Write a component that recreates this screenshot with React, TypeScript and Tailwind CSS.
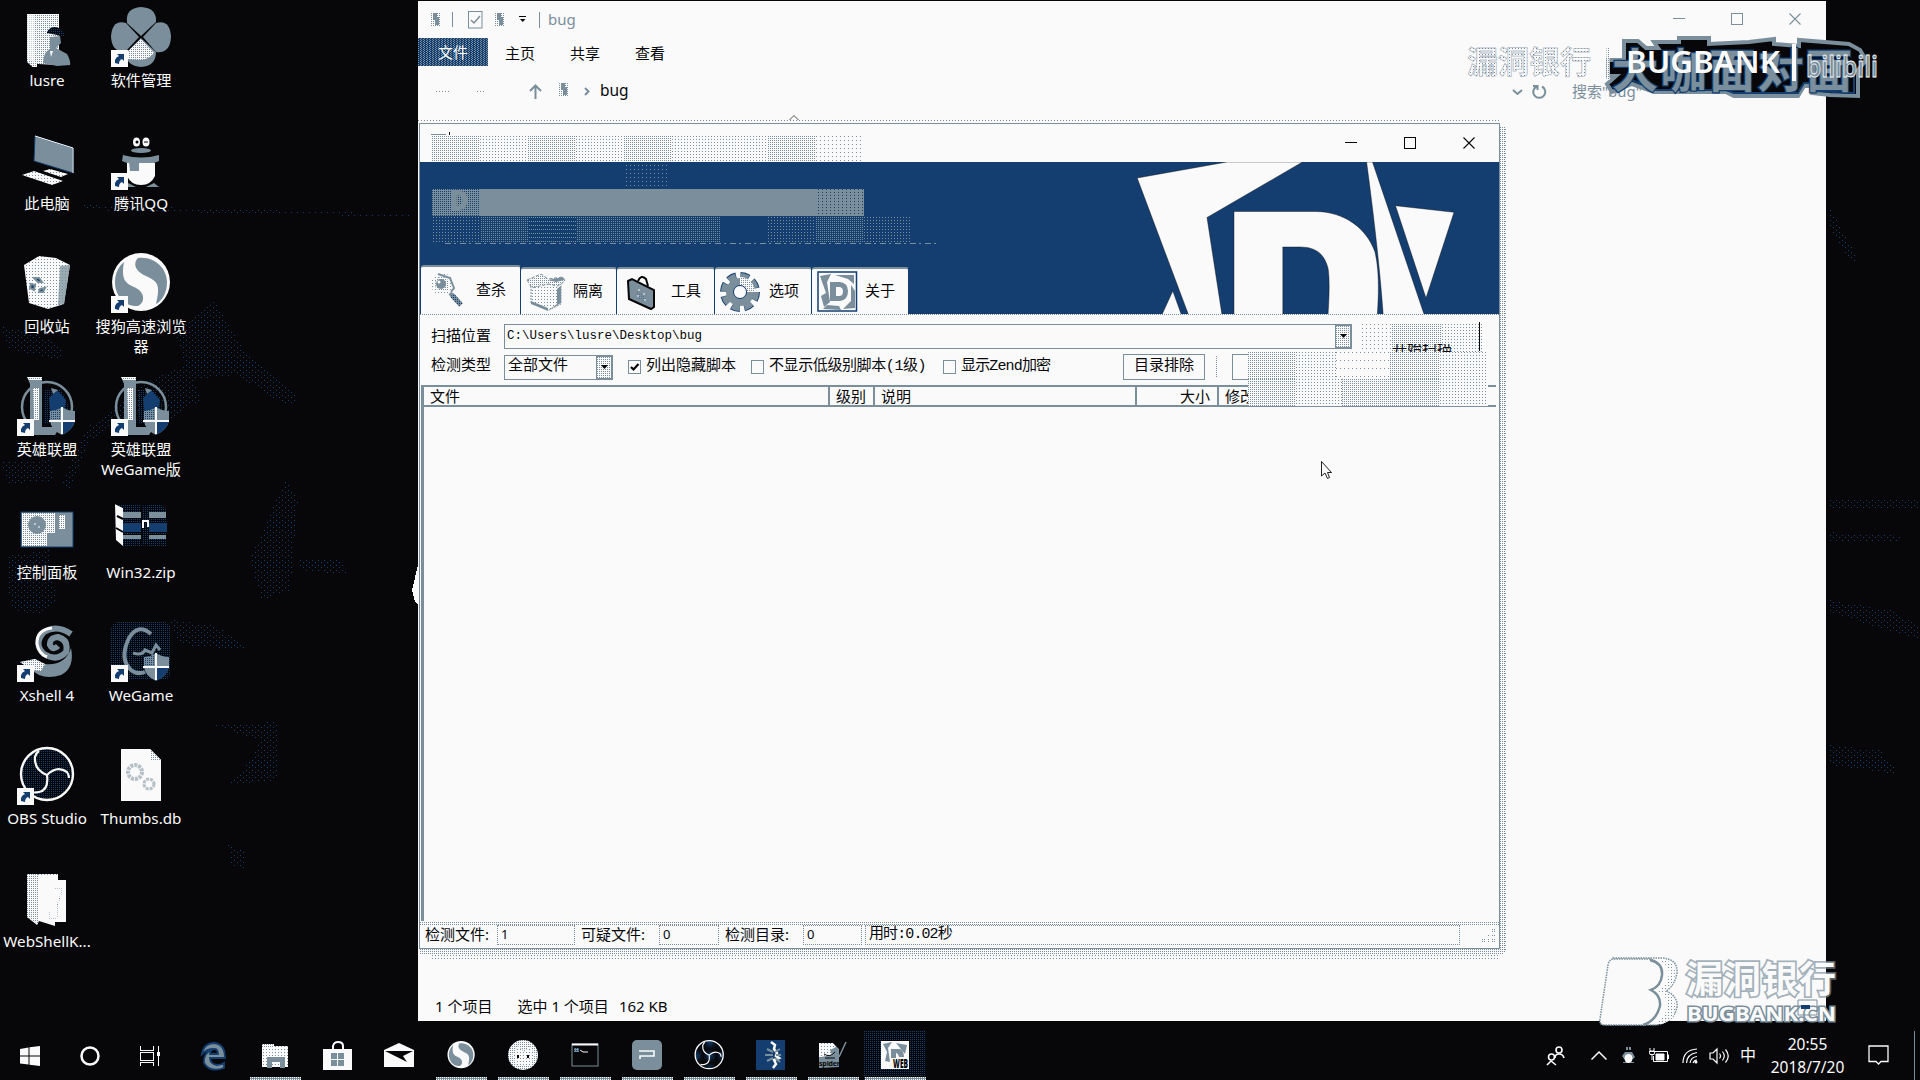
import React from "react";

const SANS = "font-['Noto_Sans','Noto_Sans_CJK_SC',sans-serif]";
const MONO = "font-['Liberation_Mono','Noto_Sans_CJK_SC',monospace]";

const CHECKER = "bg-[repeating-conic-gradient(#7a8f9b_0_25%,transparent_0_50%)] bg-[length:2px_2px]";
const DOT2 = "bg-[radial-gradient(circle_at_0.5px_0.5px,#7a8f9b_0.7px,transparent_0.7px)] bg-[length:2px_2px]";
const DOT3 = "bg-[radial-gradient(circle_at_0.5px_0.5px,#7a8f9b_0.7px,transparent_0.7px)] bg-[length:3px_3px]";
const DOT4 = "bg-[radial-gradient(circle_at_0.5px_0.5px,#7a8f9b_0.7px,transparent_0.7px)] bg-[length:4px_4px]";
const BLUEDOT = "bg-[radial-gradient(circle_at_0.5px_0.5px,#133e6f_0.7px,transparent_0.7px)] bg-[length:2px_2px]";

const W = "#fafafb";
const G = "#7a8f9b";
const B = "#133e6f";
const K = "#070709";

function Patterns() {
  return (
    <svg className="absolute h-0 w-0">
      <defs>
        <pattern id="wg" width="2" height="2" patternUnits="userSpaceOnUse">
          <rect width="2" height="2" fill={W} />
          <rect width="1" height="1" fill={G} />
        </pattern>
        <pattern id="wg3" width="3" height="3" patternUnits="userSpaceOnUse">
          <rect width="3" height="3" fill={W} />
          <rect width="1" height="1" fill={G} />
        </pattern>
        <pattern id="bk" width="2" height="2" patternUnits="userSpaceOnUse">
          <rect width="2" height="2" fill={K} />
          <rect width="1" height="1" fill={B} />
        </pattern>
        <pattern id="bg2" width="2" height="2" patternUnits="userSpaceOnUse">
          <rect width="2" height="2" fill={G} />
          <rect width="1" height="1" fill={B} />
        </pattern>
        <pattern id="speck" width="6" height="5" patternUnits="userSpaceOnUse">
          <rect x="0" y="0" width="1" height="1" fill={B} />
          <rect x="3" y="2" width="1" height="1" fill={B} />
        </pattern>
      </defs>
    </svg>
  );
}

function Wallpaper() {
  return (
    <svg className="absolute inset-0" width="1920" height="1080" shapeRendering="crispEdges">
      <g fill="url(#speck)">
        <path d="M84 205L190 208 410 214V217L84 210Z" />
        <path d="M0 326L25 330 60 345 62 360 10 350Z" />
        <path d="M140 385L190 362 200 400 170 420 150 405 90 440 70 490 62 485 85 430Z" />
        <path d="M0 462L50 460 55 480 10 484Z" />
        <path d="M8 555L50 550 56 600 40 616 10 610Z" />
        <path d="M175 330L215 300 245 350 300 400 285 405 235 375 190 380Z" />
        <path d="M285 480L298 500 290 590 262 600 250 560Z" />
        <path d="M212 725L278 722V780L225 785 252 760 260 740Z" />
        <path d="M228 845L246 850 244 868 232 866Z" />
        <path d="M170 620L215 625 250 650 180 645Z" />
        <path d="M300 560L340 560 350 575 300 570Z" />
        <path d="M1828 205L1842 230 1860 262 1850 260 1828 225Z" />
        <path d="M1828 500H1920V510H1828ZM1828 532L1900 536V542H1828Z" />
        <path d="M1828 600L1890 610 1920 625V640L1828 612Z" />
        <path d="M1828 745L1880 750 1900 775 1828 765Z" />
      </g>
      <path d="M418 565L412 590 415 602 418 605Z" fill={W} />
    </svg>
  );
}

function Arrow() {
  return (
    <g>
      <rect x="0" y="43" width="17" height="17" fill={W} />
      <path d="M4 56V53Q5 50 8 49L6 47H13V54L11 52Q8 53 8 57Z" fill={B} />
    </g>
  );
}

function Shield() {
  return (
    <g>
      <path d="M45 31Q51 35 58 35V45Q56 54 45 59Q34 54 33 45V35Q40 35 45 31Z" fill={G} />
      <path d="M33 35Q40 35 45 31V45H33Z" fill="url(#bg2)" />
      <path d="M45 45H58Q56 54 45 59Z" fill={B} />
      <path d="M45 31V58M32 45H58" stroke={W} strokeWidth="2" />
    </g>
  );
}

function ObsMark() {
  return (
    <g fill="none" stroke={W}>
      <circle cx="30" cy="29" r="26" fill="url(#bk)" strokeWidth="2.4" />
      <path d="M30 30Q17 25 18 12Q19 8 22 6M30 30Q40 20 50 27Q52 30 52 33M30 30Q32 45 22 47Q17 48 14 47" strokeWidth="2.2" />
    </g>
  );
}

function SogouMark() {
  return (
    <g>
      <circle cx="30" cy="29" r="29" fill={W} />
      <path d="M13 9C10 26 14 30 23 34C35 39 34 50 27 53C14 54 4 43 4 29C4 20 8 13 13 9Z" fill={G} />
      <path d="M27 5C43 3 56 15 56 29C56 40 51 48 45 51C49 34 48 29 37 24C23 18 22 10 27 5Z" fill={G} />
    </g>
  );
}

function LolIcon() {
  return (
    <>
      <circle cx="30" cy="31" r="25" fill="none" stroke={G} strokeWidth="2.5" />
      <path d="M28 14H44L52 30 46 48H28Z" fill="url(#bk)" />
      <path d="M32 22L40 14 49 24 46 40 34 42Z" fill={B} />
      <path d="M10 1H25V51H43L38 59H8L13 52V8Z" fill={G} />
      <path d="M10 1H25V4H12ZM16 12H22V44H17Z" fill="url(#wg)" />
      <path d="M34 12L41 14 36 18Z" fill={G} />
      <Shield />
      <Arrow />
    </>
  );
}

function DesktopGlyph({ kind }: { kind: string }) {
  const body: Record<string, React.ReactNode> = {
    user: (
      <>
        <path d="M10 7H42V58L21 57 20 57V64L10 55Z" fill="url(#wg)" />
        <path d="M10 7H18V56L10 52Z" fill={W} opacity=".6" />
        <path d="M33 30L43 29 44 36 39 41 50 47Q54 54 53 58L40 59 26 56Q27 44 33 42Z" fill={G} />
        <path d="M30 25Q34 18 42 21L48 26 46 30 40 28 30 26Z" fill="url(#bk)" />
        <path d="M33 44H36L34 50Z" fill={W} />
      </>
    ),
    clover: (
      <>
        <g fill={G}>
          <path d="M30 29L16 16Q14 1 30 0Q46 1 45 15Z" />
          <path d="M32 30L45 16Q59 12 60 30Q59 47 45 45Z" />
          <path d="M30 31L45 45Q45 59 30 60Q15 59 15 46Z" />
          <path d="M28 30L15 44Q1 46 0 30Q1 12 15 16Z" />
        </g>
        <path d="M30 32L43 46Q38 52 30 53L17 52 16 45Z" fill="url(#wg)" />
        <Arrow />
      </>
    ),
    pc: (
      <>
        <path d="M18 6L56 18V43L17 31Z" fill={G} stroke={B} strokeWidth="1" />
        <path d="M18 6L56 18V43" fill="none" stroke={W} />
        <path d="M26 41L33 39 51 44 44 47ZM5 45L17 41 46 51 35 55Z" fill="url(#wg3)" />
      </>
    ),
    qq: (
      <>
        <ellipse cx="25.500" cy="12" rx="3.500" ry="4.500" fill={W} />
        <ellipse cx="35" cy="12" rx="3.500" ry="4.500" fill={W} />
        <circle cx="26" cy="12" r="1.500" fill={K} />
        <path d="M33 12H37" stroke={K} />
        <ellipse cx="30" cy="20.500" rx="10" ry="2.500" fill={G} />
        <path d="M12 25Q30 30 48 25V31L43 33H16L11 31Z" fill={G} />
        <path d="M16 33H44V46Q40 55 30 55Q20 55 16 46Z" fill={W} />
        <path d="M18 32H28V41H19ZM17 53L25 57H14ZM43 53L48 57H35Z" fill={G} />
        <Arrow />
      </>
    ),
    bin: (
      <>
        <path d="M7 12L22 3 39 5 53 12 47 51 31 56 12 50Z" fill="url(#wg3)" />
        <path d="M43 13L53 12 47 51 41 52Z" fill={G} opacity=".75" />
        <path d="M17 25L22 25 25 29 21 29ZM14 31L18 32 17 37 13 35ZM23 36L28 35 26 39 22 39Z" fill={B} stroke={G} strokeWidth="2" />
      </>
    ),
    sogou: (
      <>
        <SogouMark />
        <Arrow />
      </>
    ),
    lol: <LolIcon />,
    panel: (
      <>
        <rect x="4" y="13" width="52" height="35" fill={G} stroke={B} />
        <path d="M5 14H38V34H30V47H5Z" fill="url(#wg)" />
        <circle cx="20" cy="26" r="9" fill={G} />
        <path d="M17 25H19M21 28H23" stroke={W} />
        <path d="M42 16H48V30H42Z" fill="url(#wg)" />
      </>
    ),
    zip: (
      <>
        <path d="M4 5L12 9V47L5 41Z" fill={W} />
        <path d="M4 5H50L56 11V47H12V9Z" fill="url(#bk)" />
        <path d="M12 13H55V19H12ZM12 36H55V40H12Z" fill={G} />
        <path d="M12 24H56V33H12Z" fill={B} />
        <path d="M6 17L12 20M5 29L12 33" stroke={K} strokeWidth="2" />
        <path d="M30.500 6H37.500V46H30.500Z" fill="url(#bk)" stroke={K} strokeWidth="1" />
        <path d="M32 29V22H37V28" fill="none" stroke={W} strokeWidth="2" />
      </>
    ),
    xshell: (
      <>
        <path d="M54 12Q40 2 27 10Q16 22 27 32Q40 40 49 30Q52 18 41 15Q32 16 33 23Q36 29 41 24" fill="none" stroke={G} strokeWidth="6" />
        <path d="M35 6Q19 8 20 22Q22 32 30 35" fill="none" stroke={W} strokeWidth="3" />
        <path d="M3 40L18 37 28 42Q48 44 54 26Q58 46 44 53Q32 57 22 53L14 48Z" fill={G} />
        <path d="M3 40L18 37 28 42 24 49 14 48Z" fill="url(#wg)" />
        <Arrow />
      </>
    ),
    wegame: (
      <>
        <rect width="60" height="58" rx="8" fill="url(#bk)" />
        <path d="M40 12Q27 1 18 16Q8 37 20 48Q26 53 34 50" fill="none" stroke={G} strokeWidth="4" />
        <path d="M22 31Q31 34 34 28L41 31 45 23 49 28" fill="none" stroke={G} strokeWidth="3" />
        <Shield />
        <Arrow />
      </>
    ),
    obs: (
      <>
        <ObsMark />
        <Arrow />
      </>
    ),
    db: (
      <>
        <path d="M10 4H39L50 15V56H10Z" fill={W} />
        <path d="M39 4V15H50Z" fill="url(#wg)" />
        <circle cx="24" cy="27" r="7" fill="none" stroke={G} strokeOpacity=".55" strokeWidth="4" strokeDasharray="3 1" />
        <circle cx="38" cy="39" r="5" fill="none" stroke={G} strokeOpacity=".55" strokeWidth="3" strokeDasharray="3 1" />
      </>
    ),
    folder: (
      <>
        <path d="M10 6H41V12H49V54H38V58L22 53 20 57 10 49Z" fill={W} />
        <path d="M10 6H21V56L10 49Z" fill="url(#wg)" />
        <path d="M21 6H41V9H21Z" fill="url(#wg3)" />
        <path d="M38 20H44V26L40 38V50H32V44" fill="none" stroke="url(#wg)" strokeWidth="1" />
      </>
    ),
  };
  return (
    <svg width="60" height="60" viewBox="0 0 60 60" className="block shrink-0">
      {body[kind]}
    </svg>
  );
}

const desktopItems = [
  ["user", "lusre"],
  ["pc", "此电脑"],
  ["bin", "回收站"],
  ["lol", "英雄联盟"],
  ["panel", "控制面板"],
  ["xshell", "Xshell 4"],
  ["obs", "OBS Studio"],
  ["folder", "WebShellK..."],
  ["clover", "软件管理"],
  ["qq", "腾讯QQ"],
  ["sogou", "搜狗高速浏览器"],
  ["lol", "英雄联盟\nWeGame版"],
  ["zip", "Win32.zip"],
  ["wegame", "WeGame"],
  ["db", "Thumbs.db"],
];

function DesktopIcons() {
  return (
    <div className="absolute top-0 left-0 grid grid-flow-col auto-cols-[94px] grid-rows-[repeat(8,123px)]">
      {desktopItems.map(([k, label]) => (
        <div key={k + label} className="flex flex-col items-center pt-[7px]">
          <DesktopGlyph kind={k} />
          <div className="mt-[3px] w-[96px] text-center text-[15.2px] leading-[20px] whitespace-pre-line text-[#fafafb]">
            {label}
          </div>
        </div>
      ))}
    </div>
  );
}

function TinyBug() {
  return (
    <svg width="12" height="17" viewBox="0 0 12 17" shapeRendering="crispEdges">
      <path d="M1 1H11V16H1Z" fill="url(#wg)" />
      <path d="M5 2H8V6H10V14H6V9H4V5Z" fill={G} />
    </svg>
  );
}

function WinButtons({ color, gap }: { color: string; gap: string }) {
  return (
    <div className={`flex items-center ${gap}`}>
      <svg width="12" height="13" shapeRendering="crispEdges">
        <path d="M0 5.500H12" stroke={color} />
      </svg>
      <svg width="12" height="13" shapeRendering="crispEdges">
        <rect x=".5" y=".5" width="11" height="11" fill="none" stroke={color} />
      </svg>
      <svg width="12" height="13">
        <path d="M.5.5L11.500 11.500M11.500.5L.5 11.500" stroke={color} strokeWidth="1.100" />
      </svg>
    </div>
  );
}

function Explorer() {
  return (
    <div className="absolute top-px left-[418px] flex h-[1020px] w-[1408px] flex-col bg-[#fafafb] text-[#070709]">
      <div className="flex h-[37px] shrink-0 items-center pl-[11px] text-[15px] text-[#7a8f9b]">
        <TinyBug />
        <span className="ml-[11px] h-[15px] w-px bg-[#7a8f9b]" />
        <svg className="ml-[15px]" width="15" height="18" fill="none" stroke={G}>
          <rect x=".5" y=".5" width="13.500" height="16.500" />
          <path d="M3 9L6 12 12 5" strokeWidth="1.500" />
        </svg>
        <span className="ml-[10px] flex"><TinyBug /></span>
        <svg className="ml-[14px]" width="8" height="8">
          <path d="M0 .5H7" stroke={K} />
          <path d="M1 3H6.500L3.700 6Z" fill={K} />
        </svg>
        <span className="ml-[12px] h-[16px] w-px bg-[#7a8f9b]" />
        <span className="ml-[8px]">bug</span>
        <span className="ml-auto pr-[25px]"><WinButtons color={G} gap="gap-[46px]" /></span>
      </div>
      <div className="flex h-[28px] shrink-0 items-center text-[15px]">
        <div className="flex h-[28px] w-[70px] items-center justify-center bg-[#7a8f9b] bg-[repeating-conic-gradient(#133e6f_0_25%,transparent_0_50%)] bg-[length:3px_2px] pt-px text-[#fafafb]">
          文件
        </div>
        <span className="mt-[2px] ml-[17px]">主页</span>
        <span className="mt-[2px] ml-[35px]">共享</span>
        <span className="mt-[2px] ml-[35px]">查看</span>
      </div>
      <div className="flex h-[50px] shrink-0 items-center pl-[18px] text-[15.5px]">
        <span className={`h-px w-[13px] ${DOT3}`} />
        <span className={`ml-[28px] h-px w-[9px] ${DOT3}`} />
        <svg className="mt-px ml-[43px]" width="13" height="15" fill="none" stroke={G} strokeWidth="2">
          <path d="M6.500 15V2M1 7L6.500 1.500 12 7" />
        </svg>
        <span className="mb-[3px] ml-[15px] flex"><TinyBug /></span>
        <svg className="ml-[15px]" width="6" height="9" fill="none" stroke={G} strokeWidth="2">
          <path d="M1 1L4.500 4.500 1 8" />
        </svg>
        <span className="ml-[10px]">bug</span>
        <svg className="mt-[2px] ml-auto" width="11" height="7" fill="none" stroke={G} strokeWidth="2">
          <path d="M1 1L5.500 5 10 1" />
        </svg>
        <svg className="ml-[9px]" width="15" height="15" fill="none" stroke={G} strokeWidth="2">
          <path d="M10 2.500A6 6 0 1 1 4.500 2.500M1 2H5.500V6" />
        </svg>
        <span className="ml-[25px] w-[254px] text-[15px] text-[#7a8f9b]">搜索"bug"</span>
      </div>
      <svg className="-mt-px ml-[371px]" width="10" height="6" fill="none" stroke={K} strokeOpacity=".7">
        <path d="M.5 5L5 .5 9.500 5" />
      </svg>
      <div className="mt-auto flex h-[30px] items-center pl-[17px] text-[15px]">
        <span>1 个项目</span>
        <span className="ml-[25px]">选中 1 个项目</span>
        <span className="ml-[10px]">162 KB</span>
      </div>
    </div>
  );
}

function BannerLogo() {
  return (
    <svg className="block" width="380" height="152" viewBox="1119 162 380 152" fill={W} stroke={K} strokeWidth=".4">
      <path d="M1137.200 178L1227 162H1302.500L1207 217.500 1222 315H1188.600Z" />
      <path d="M1172.800 291L1161.800 315H1181.500Z" />
      <path
        fillRule="evenodd"
        d="M1234 211.500H1315C1345 211.500 1367 229 1375 252C1379 270 1379 290 1377.300 315H1234ZM1282.800 247V315H1328C1329 300 1330 280 1328 268C1324 253 1315 247 1300 247Z"
      />
      <path d="M1366.600 162H1372.500L1424.300 315H1383.200Q1379 255 1366.600 162Z" />
      <path d="M1395.500 205.700L1454 212.300 1426 298Z" />
    </svg>
  );
}

function Magnifier() {
  return (
    <svg width="40" height="40">
      <path d="M21 22L28 30" stroke={G} strokeWidth="4" />
      <circle cx="13" cy="13" r="9" fill="url(#wg)" stroke="url(#wg3)" strokeWidth="4" />
      <path d="M9 3L21 7 25 17 22 21" fill="none" stroke={G} strokeWidth="2" />
      <circle cx="12" cy="13" r="5" fill={G} />
      <circle cx="10" cy="11" r="1.500" fill={W} />
      <path d="M23 24L32 34" stroke="url(#bg2)" strokeWidth="5" />
    </svg>
  );
}
function Box() {
  return (
    <svg width="40" height="40">
      <path d="M5 13L21 8 35 12V32L23 38 5 31Z" fill="url(#wg3)" stroke={G} strokeDasharray="2 1" />
      <path d="M1 8L15 2 22 7 37 5 39 9 32 14 22 12 6 16Z" fill="url(#wg)" stroke={G} strokeDasharray="3 2" />
      <path d="M23 38L35 31V14L31 17V32Z" fill={G} />
      <path d="M5 29L22 36V39L5 32ZM22 8L37 5 38 8 30 10Z" fill={G} />
    </svg>
  );
}
function Bag() {
  return (
    <svg width="40" height="40">
      <path d="M15 9Q18 2 23 7L25 14" fill="none" stroke={K} strokeWidth="2" />
      <path d="M5 9L9 7 31 18V35L28 37 6 27Z" fill={G} stroke={K} strokeWidth="2" />
      <path d="M13 19L22 23 23 30 14 26Z" fill="url(#bg2)" opacity=".4" />
      <path d="M15 18H17M20 22H22M14 24H16M21 28H23" stroke={W} />
    </svg>
  );
}
function Gear() {
  return (
    <svg width="42" height="40">
      <circle cx="21" cy="20" r="16.500" fill="none" stroke={B} strokeWidth="7" strokeDasharray="8.500 4.460" />
      <circle cx="21" cy="20" r="16" fill="none" stroke={G} strokeWidth="6" strokeDasharray="7.800 4.766" />
      <circle cx="21" cy="20" r="14" fill={G} />
      <path d="M21 5A15 15 0 0 1 36 20H28A7 7 0 0 0 21 13Z" fill="url(#wg)" />
      <circle cx="21" cy="20" r="6.500" fill={W} stroke={B} />
    </svg>
  );
}
function AboutD() {
  return (
    <svg width="41" height="41">
      <rect x="1" y="1" width="38.500" height="39" fill={W} stroke={B} strokeWidth="1.500" />
      <path d="M3 5L14 3 10 11 13 31 7 36 4 25 9 22ZM18 4L37 4 37 13 31 8ZM34 14L38 20V37L26 38 34 30ZM10 34L22 35 24 39 6 38Z" fill={G} />
      <path fillRule="evenodd" d="M13 11H23Q31 12 31 20Q31 29 23 30H13ZM19 16V25H22Q26 25 26 20.500Q26 16 22 16Z" fill={G} />
    </svg>
  );
}

const tabs: [string, React.ReactNode, string, string][] = [
  ["查杀", <Magnifier />, "w-[100px] h-[49px] pl-[8px]", "ml-[7px]"],
  ["隔离", <Box />, "w-[96px] h-[47px] pl-[5px]", "ml-[7px]"],
  ["工具", <Bag />, "w-[98px] h-[47px] pl-[6px]", "ml-[8px]"],
  ["选项", <Gear />, "w-[97px] h-[47px] pl-[4px]", "ml-[8px]"],
  ["关于", <AboutD />, "w-[97px] h-[47px] pl-[5px]", "ml-[7px]"],
];

function Banner() {
  return (
    <div className="relative flex h-[152px] shrink-0 items-end justify-between overflow-hidden bg-[#133e6f]">
      <div className="flex items-end pl-px">
        {tabs.map(([label, icon, size, gap]) => (
          <div
            key={label}
            className={`flex items-center rounded-t-[3px] border-t-2 border-r border-r-[#133e6f] border-t-[#7a8f9b] bg-[#fafafb] text-[15px] ${size}`}
          >
            {icon}
            <span className={`-mt-[2px] whitespace-nowrap ${gap}`}>{label}</span>
          </div>
        ))}
      </div>
      <BannerLogo />
      <div className={`absolute top-[3px] left-[206px] h-[24px] w-[44px] ${DOT4}`} />
      <div className="absolute top-[27px] left-[12px] flex h-[27px] w-[432px] bg-[#7a8f9b]">
        <div className={`w-[48px] pl-[6px] text-center text-[26px] leading-[22px] font-black text-[#7a8f9b] ${BLUEDOT}`}>D</div>
        <div className="ml-auto w-[46px] bg-[radial-gradient(circle_at_0.5px_0.5px,#133e6f_0.7px,transparent_0.7px)] bg-[length:4px_3px]" />
      </div>
      <div className="absolute top-[55px] left-[13px] flex h-[25px]">
        <div className={`w-[48px] ${DOT3}`} />
        <div className={`w-[48px] ${DOT2}`} />
        <div className="w-[48px] bg-[radial-gradient(circle_at_0.5px_0.5px,#7a8f9b_0.7px,transparent_0.7px)] bg-[length:2px_4px]" />
        <div className={`w-[96px] ${DOT2}`} />
        <div className={`w-[48px] ${DOT2}`} />
        <div className={`ml-[47px] w-[48px] ${DOT3}`} />
        <div className={`w-[48px] ${DOT2}`} />
        <div className={`w-[48px] ${DOT3}`} />
      </div>
      <div className="absolute top-[81px] left-[25px] h-px w-[495px] bg-[repeating-linear-gradient(90deg,#7a8f9b_0_6px,transparent_6px_9px,#7a8f9b_9px_11px,transparent_11px_15px)]" />
    </div>
  );
}

function Check({ label, checked, gap }: { label: string; checked?: boolean; gap: string }) {
  return (
    <label className={`flex items-center ${gap}`}>
      <svg width="13" height="14">
        <rect x=".5" y=".5" width="12" height="13" fill={W} stroke={G} />
        {checked && <path d="M3 7L5.500 9.500 10.500 4" fill="none" stroke={K} strokeWidth="2.200" />}
      </svg>
      <span className="ml-[5px] whitespace-nowrap">{label}</span>
    </label>
  );
}

function DropButton() {
  return (
    <span className={`flex h-full w-4 items-center justify-center border border-[#7a8f9b] ${DOT2}`}>
      <svg width="7" height="4">
        <path d="M0 0H7L3.500 4Z" fill={K} />
      </svg>
    </span>
  );
}

function Mosaic() {
  return (
    <>
      <div className="absolute top-[200px] left-[942px] flex h-[28px]">
        <div className={`w-[30px] ${DOT4}`} />
        <div className={`w-[50px] ${DOT2}`} />
        <div className={`w-[42px] ${DOT3}`} />
      </div>
      <div className="absolute top-[198px] left-[1059px] h-[29px] w-px bg-[#070709]" />
      <div className="absolute top-[220px] left-[970px] flex h-[8px] w-[64px] items-center justify-center overflow-hidden text-[15px] leading-[14px]">
        开始扫描
      </div>
      <div className="absolute top-[228px] left-[828px] flex h-[27px] bg-[#fafafb]">
        <div className={`w-[48px] ${DOT2}`} />
        <div className={`w-[40px] ${DOT3}`} />
        <div className="w-[54px] bg-[radial-gradient(circle_at_0.5px_0.5px,#7a8f9b_0.7px,transparent_0.7px)] bg-[length:4px_8px]" />
        <div className={`w-[50px] ${DOT2}`} />
        <div className={`w-[48px] ${DOT3}`} />
      </div>
      <div className="absolute top-[255px] left-[828px] flex h-[27px] bg-[#fafafb]">
        <div className={`w-[48px] ${DOT2}`} />
        <div className={`w-[46px] ${DOT3}`} />
        <div className={`w-[48px] ${DOT2}`} />
        <div className={`w-[50px] ${DOT2}`} />
        <div className={`w-[48px] ${DOT3}`} />
      </div>
    </>
  );
}

function HeaderCell({ children, className }: { children?: React.ReactNode; className: string }) {
  return <div className={`flex items-center border-r-2 border-[#7a8f9b] ${className}`}>{children}</div>;
}

function Scanner() {
  return (
    <div className="absolute top-[119px] left-[418px] pt-[4px] pr-[9px] pb-[11px] pl-px">
      <div className={`absolute top-px right-[9px] left-0 h-[3px] ${DOT3}`} />
      <div className={`absolute top-[8px] right-[4px] bottom-[7px] w-[5px] ${DOT2}`} />
      <div className={`absolute top-[10px] right-0 bottom-[9px] w-[4px] ${DOT4}`} />
      <div className={`absolute right-[6px] bottom-[5px] left-[2px] h-[6px] ${DOT2}`} />
      <div className={`absolute right-[9px] bottom-0 left-[14px] h-[5px] ${DOT3}`} />
      <div className="relative flex h-[826px] w-[1081px] flex-col border border-[#7a8f9b] bg-[#fafafb] text-[15px] text-[#070709]">
        <div className="relative flex h-[38px] shrink-0 items-center justify-end pr-[24px]">
          <WinButtons color={K} gap="gap-[47px]" />
          <div className="absolute top-[12px] left-[12px] flex h-[26px]">
            <div className={`w-[48px] ${DOT2}`} />
            <div className={`w-[48px] ${DOT3}`} />
            <div className={`w-[48px] ${DOT2}`} />
            <div className={`w-[48px] ${DOT3}`} />
            <div className={`w-[48px] ${DOT2}`} />
            <div className={`w-[96px] ${DOT3}`} />
            <div className={`w-[48px] ${DOT2}`} />
            <div className={`w-[46px] ${DOT4}`} />
          </div>
          <div className="absolute top-[10px] left-[11px] h-px w-[15px] bg-[#7a8f9b]" />
          <div className="absolute top-[8px] left-[29px] h-[3px] w-px bg-[#070709]" />
        </div>
        <Banner />
        <div className={`h-px shrink-0 ${DOT2}`} />
        <div className="mt-[8px] flex h-[26px] shrink-0 items-center pl-[11px]">
          <span className="w-[73px] -translate-y-px">扫描位置</span>
          <div className="flex h-[25px] w-[848px] items-center justify-between border border-[#7a8f9b]">
            <span className={`pl-[2px] text-[12.5px] ${MONO}`}>C:\Users\lusre\Desktop\bug</span>
            <DropButton />
          </div>
        </div>
        <div className={`mt-[5px] flex h-[26px] shrink-0 items-center pl-[11px] ${MONO}`}>
          <span className="w-[73px]">检测类型</span>
          <div className="flex h-[25px] w-[109px] items-center justify-between border border-[#7a8f9b] pl-[3px]">
            <span>全部文件</span>
            <DropButton />
          </div>
          <div className="flex items-center text-[15px]">
            <Check label="列出隐藏脚本" checked gap="ml-[15px]" />
            <Check label="不显示低级别脚本(1级)" gap="ml-[15px] w-[177px] tracking-[-0.4px]" />
            <Check label="显示Zend加密" gap="ml-[15px] w-[110px] tracking-[-0.85px]" />
          </div>
          <div className="ml-[70px] flex h-[26px] w-[82px] items-center justify-center border border-[#7a8f9b]">目录排除</div>
          <span className="ml-[11px] h-[22px] w-px bg-[linear-gradient(#7a8f9b_50%,transparent_50%)] bg-[length:1px_2px]" />
          <span className="ml-[15px] h-[26px] w-[16px] border border-r-0 border-[#7a8f9b]" />
        </div>
        <div className="mt-[5px] ml-px flex h-[536px] shrink-0 flex-col border-l-[3px] border-[#7a8f9b]">
          <div className="flex h-[22px] w-[1072px] shrink-0 border-y-2 border-[#7a8f9b]">
            <HeaderCell className="w-[406px] pl-[6px]">文件</HeaderCell>
            <HeaderCell className="w-[45px] pl-[6px]">级别</HeaderCell>
            <HeaderCell className="w-[262px] pl-[6px]">说明</HeaderCell>
            <HeaderCell className="w-[82px] justify-end pr-[7px]">大小</HeaderCell>
            <span className="flex items-center pl-[6px]">修改</span>
          </div>
        </div>
        <div className={`mt-auto h-[3px] shrink-0 ${DOT2}`} />
        <div className="flex h-[23px] shrink-0 items-start pl-[5px] leading-[19px]">
          <span className="w-[72px]">检测文件:</span>
          <span className="h-[20px] w-[78px] border border-dotted border-[#7a8f9b] pl-[3px] text-[13px] leading-[17px]">1</span>
          <span className="w-[84px] pl-[6px]">可疑文件:</span>
          <span className="h-[20px] w-[60px] border border-dotted border-[#7a8f9b] pl-[3px] text-[13px] leading-[17px]">0</span>
          <span className="w-[84px] pl-[6px]">检测目录:</span>
          <span className="h-[20px] w-[59px] border border-dotted border-[#7a8f9b] pl-[3px] text-[13px] leading-[17px]">0</span>
          <span className={`ml-[3px] h-[20px] w-[595px] border border-dotted border-[#7a8f9b] pl-[3px] leading-[18px] tracking-[-0.9px] ${MONO}`}>
            用时:0.02秒
          </span>
          <svg className="mt-[4px] ml-[22px]" width="14" height="14">
            <path d="M10 0H13V3H10ZM5 5H8V8H5ZM10 5H13V8H10ZM0 10H3V13H0ZM5 10H8V13H5ZM10 10H13V13H10Z" fill="url(#wg)" />
          </svg>
        </div>
        <Mosaic />
      </div>
    </div>
  );
}

function TopWatermark() {
  return (
    <div className="absolute top-[36px] left-[1464px] h-[64px] w-[440px]">
      <svg width="440" height="64" className="block">
        <path
          d="M144 24H160V5H174L182 12H194L190 6H215V2H245V8L285 6L310 3V8L335 10V4L385 8L396 14L402 24 394 34V60L366 59 348 57V50H340L334 60H270L262 56H190L168 48L148 56L143 48L152 40H144Z"
          fill={K}
          stroke={G}
          strokeWidth="4"
        />
        <path d="M150 50L168 44 192 54H262L270 57H334L340 47H350V55L390 57V36" fill="none" stroke={B} strokeWidth="2" />
        <g fontFamily="'Noto Sans CJK SC', sans-serif" fontWeight="700">
          <text x="3" y="37" fontSize="31" fill="url(#wg3)" stroke={G} strokeOpacity=".6" strokeWidth=".8">漏洞银行</text>
          <text x="148" y="51" fontSize="46" textLength="240" stroke={B} strokeWidth="2.500" fill={G} paintOrder="stroke">大咖面对面</text>
          <path d="M144 12V44" stroke="url(#wg)" strokeWidth="3" />
        </g>
        <text x="162" y="37" fontSize="31" fontWeight="600" fontFamily="'Noto Sans', sans-serif" textLength="154" lengthAdjust="spacingAndGlyphs" fill={W}>BUGBANK</text>
        <path d="M330 8V45" stroke={W} strokeWidth="4" />
        <g fontSize="29" fontWeight="600" fontFamily="'Noto Sans', sans-serif">
          <text x="342" y="41" textLength="72" lengthAdjust="spacingAndGlyphs" fill={G} stroke={W} strokeWidth=".8">bilibili</text>
        </g>
      </svg>
    </div>
  );
}

function BottomWatermark() {
  return (
    <div className="absolute top-[955px] left-[1596px] h-[74px] w-[244px]">
      <svg width="244" height="74" className="block">
        <path d="M17 3H66Q82 4 81 18Q79 30 70 36Q82 41 81 52Q78 67 60 70H10Z" fill={W} stroke={G} strokeDasharray="1.500 1" strokeWidth="1.500" />
        <path d="M60 5Q74 8 73 20Q71 31 62 36Q73 41 71 53Q68 66 56 69H66Q80 64 79 52Q79 41 69 36Q79 30 79 18Q79 6 66 5Z" fill="url(#wg3)" />
        <path d="M18 4H54Q67 8 66 20Q65 31 55 35Q65 40 64 51Q60 67 47 70H8Q3 70 4 64L12 10Q13 4 18 4Z" fill={W} stroke={G} strokeDasharray="1.500 1" strokeWidth="1.500" />
        <path d="M54 5Q67 8 66 20Q65 31 55 35Q65 40 64 51Q60 66 47 70" fill="none" stroke={G} strokeWidth="2.500" />
        <g fontFamily="'Noto Sans CJK SC', sans-serif" fontWeight="700">
          <text x="90" y="38" fontSize="37" textLength="150" fill={W} stroke={G} strokeOpacity=".7" strokeWidth="3.500" paintOrder="stroke">漏洞银行</text>
          <text x="91" y="66" fontSize="20" textLength="149" lengthAdjust="spacingAndGlyphs" fontFamily="'Noto Sans', sans-serif" fill={W} stroke={G} strokeWidth="3" paintOrder="stroke">BUGBANK.CN</text>
        </g>
        <path d="M202 45H221V60H202Z" fill="none" stroke={G} />
        <path d="M205 50H214V54H205Z" fill={B} />
      </svg>
    </div>
  );
}

function TaskGlyph({ kind }: { kind: string }) {
  const body: Record<string, React.ReactNode> = {
    edge: (
      <>
        <path d="M4 14Q6 3 16 3Q27 4 27 18H12Q12 24 19 25Q23 25 26 23V28Q12 33 6 23Q5 13 15 9Q9 9 4 14ZM12 14H20Q20 9 16 9Q12 10 12 14Z" fill={G} fillRule="evenodd" stroke={B} strokeWidth="1.800" />
      </>
    ),
    folder: (
      <>
        <path d="M2 4H14V6H28V27H2Z" fill="url(#wg3)" />
        <path d="M2 4H13L11 8H2Z" fill="url(#wg)" />
        <path d="M7 28V17H25V28H20V22H12V28Z" fill={G} />
      </>
    ),
    store: (
      <>
        <path d="M11 10V6Q12 2 16 2Q21 2 21 6V10" fill="none" stroke={W} strokeWidth="2" />
        <rect x="1" y="9" width="29" height="21" fill={W} />
        <path d="M9 13H15V19H9ZM16 13H22V19H16ZM9 20H15V26H9ZM16 20H22V26H16Z" fill={G} />
      </>
    ),
    mail: (
      <>
        <path d="M0 10L15 3 30 10V27H0Z" fill={W} />
        <path d="M1 11H29L19 16 23 22Z" fill={K} />
      </>
    ),
    sogou: (
      <g transform="translate(1 1) scale(.47)">
        <SogouMark />
      </g>
    ),
    face: (
      <>
        <circle cx="15" cy="15" r="15" fill="url(#wg)" />
        <path d="M4 15L10 6 16 12 22 6 27 14 23 25 9 26Z" fill="url(#wg3)" />
        <path d="M10 15V18M20 15V18" stroke={K} strokeWidth="2" />
      </>
    ),
    term: (
      <>
        <rect x="2" y="4" width="26" height="22" fill={K} stroke={G} />
        <path d="M2 4.500H28" stroke={W} strokeWidth="2" />
        <path d="M4 8H9V12H4Z" fill="url(#bg2)" />
        <path d="M10 10L13 12H18" stroke={W} fill="none" />
      </>
    ),
    p: (
      <>
        <rect width="30" height="30" rx="5" fill={G} />
        <path d="M7 11H22V16H8V19" fill="none" stroke={W} strokeWidth="1.600" />
      </>
    ),
    obs: (
      <g transform="translate(-1 -1) scale(.54)">
        <ObsMark />
      </g>
    ),
    bug: (
      <>
        <rect x="0" y="0" width="29" height="30" fill={B} />
        <path d="M15 2L19 5 18 9 21 13 20 16 23 18 18 20 20 24 17 28" fill="none" stroke={W} strokeWidth="2.500" />
        <path d="M11 9L17 12M9 15H17M11 21L17 18M24 9L19 12M25 15H20M24 22L19 18" stroke={G} strokeWidth="2" />
      </>
    ),
    spider: (
      <>
        <path d="M1 3H15L21 9V27L1 28Z" fill={G} />
        <path d="M1 3H15L18 7 12 10 14 15 3 17H1Z" fill="url(#wg3)" />
        <path d="M28 2L21 17" stroke={G} strokeWidth="1.500" />
        <path d="M6 14Q12 18 17 12M7 18H17" stroke={K} fill="none" />
        <text x="1" y="26" fontSize="7" fontWeight="700" textLength="21" fill={K} fontFamily="Noto Sans">spider</text>
      </>
    ),
    web: (
      <>
        <rect x="1" y="1" width="28" height="28" fill={W} />
        <path d="M3 4L12 2 8 8 10 22 5 21 7 12ZM11 9H20Q24 11 24 17H19Q18 13 16 13V18H11ZM16 3L27 5 25 14Z" fill={G} />
        <text x="13" y="28" fontSize="13" fontWeight="900" textLength="15" lengthAdjust="spacingAndGlyphs" fill={K} fontFamily="Noto Sans">WEB</text>
      </>
    ),
  };
  return (
    <svg width="30" height="30" viewBox="0 0 30 30" className="block overflow-visible">
      {body[kind]}
    </svg>
  );
}

const tasks: [string, boolean][] = [
  ["edge", false],
  ["folder", true],
  ["store", false],
  ["mail", false],
  ["sogou", true],
  ["face", true],
  ["term", true],
  ["p", true],
  ["obs", true],
  ["bug", true],
  ["spider", true],
  ["web", true],
];

function Taskbar() {
  return (
    <div className="absolute inset-x-0 bottom-0 flex h-[59px] items-end bg-[#070709] text-[#fafafb]">
      <div className="flex h-[49px] w-[182px] items-center">
        <span className="flex w-[60px] justify-center">
          <svg width="20" height="20" fill={W}>
            <path d="M0 3L8.500 1.500V9.500H0ZM9.500 1.300L20 0V9.500H9.500ZM0 10.500H8.500V18.500L0 17.500ZM9.500 10.500H20V20L9.500 18.700Z" />
          </svg>
        </span>
        <span className="flex w-[60px] justify-center">
          <svg width="20" height="20">
            <circle cx="10" cy="10" r="8.500" fill="none" stroke={W} strokeWidth="2.500" />
          </svg>
        </span>
        <span className="flex w-[60px] justify-center">
          <svg width="20" height="20" fill="none" stroke={W} shapeRendering="crispEdges">
            <path d="M.5 0V4.500H13V0M.5 20V16H13V20M.5 6H13V14H.5ZM18.500 0V20" />
            <path d="M17 6H20V9H17Z" fill={W} />
          </svg>
        </span>
      </div>
      {tasks.map(([k, open]) => (
        <div
          key={k}
          className={`flex h-[49px] w-[62px] flex-col items-center ${
            k === "web" ? "bg-[radial-gradient(circle_at_0.5px_0.5px,#133e6f_0.7px,transparent_0.7px)] bg-[length:2px_2px]" : ""
          }`}
        >
          <div className="mt-[9px]"><TaskGlyph kind={k} /></div>
          {open && (
            <div
              className={`mt-auto h-[3px] bg-[#7a8f9b] bg-[radial-gradient(circle_at_0.5px_0.5px,#fafafb_0.7px,transparent_0.7px)] bg-[length:2px_2px] ${
                k === "web" ? "w-[61px]" : "w-[51px]"
              }`}
            />
          )}
        </div>
      ))}
      <div className="ml-auto flex h-[49px] items-center">
        <svg width="19" height="20" fill="none" stroke={W} strokeWidth="1.600">
          <circle cx="13" cy="4" r="3" />
          <circle cx="5.500" cy="11" r="3" />
          <path d="M9 12Q9 8 13 8Q17 8 18 12M1 19L5 15 10 19" />
        </svg>
        <svg className="ml-[26px]" width="16" height="9" fill="none" stroke={W} strokeWidth="1.500">
          <path d="M.5 8.500L8 1 15.500 8.500" />
        </svg>
        <svg className="ml-[15px]" width="13" height="17">
          <path d="M4 0H6V3H4ZM7 0H9V3H7ZM3 5H10L13 10 11 12H2L0 9ZM1 15H12V16H1Z" fill={G} />
          <ellipse cx="6.500" cy="11.500" rx="4" ry="4.500" fill={W} />
        </svg>
        <svg className="ml-[14px]" width="20" height="16" fill="none" stroke={W}>
          <path d="M5 3.500H18.500V13.500H4.500V8" />
          <path d="M19 6.500V11" strokeWidth="2" />
          <path d="M7 6H15V12H7Z" fill={W} />
          <path d="M1 0V3H5V0M0 3.500H6L5 6.500H1ZM3 7V12" />
        </svg>
        <svg className="ml-[13px]" width="16" height="16" fill="none" stroke={W} strokeWidth="1.200">
          <path d="M1 15Q1 2 15 1M4.500 15Q5 6 15 4.500M8 15Q9 9 15 8.500M11 15Q12 12 15 12" />
          <circle cx="14" cy="14" r="1.500" fill={W} stroke="none" />
        </svg>
        <svg className="ml-[11px]" width="22" height="18" fill="none" stroke={W} strokeWidth="1.200">
          <path d="M1 6H4L8 2V16L4 12H1ZM10.500 6.500Q12.500 9 10.500 11.500M13.500 4.500Q17 9 13.500 13.500M16.500 2.500Q22 9 16.500 15.500" />
        </svg>
        <span className="ml-[9px] -translate-y-px text-[16px] leading-none">中</span>
        <div className="ml-[14px] w-[75px] text-center text-[15.5px] leading-[23px] whitespace-nowrap">
          <div>20:55</div>
          <div>2018/7/20</div>
        </div>
        <svg className="ml-[23px]" width="21" height="21" fill="none" stroke={W} strokeWidth="1.300">
          <path d="M1 1H20V16.500H13L10.500 19 8 16.500H1Z" />
        </svg>
        <span className="mr-[5px] ml-[25px] h-full w-px bg-[#7a8f9b]" />
      </div>
    </div>
  );
}

export default function App() {
  return (
    <div className={`relative h-[1080px] w-[1920px] overflow-hidden bg-[#070709] ${SANS}`}>
      <Patterns />
      <Wallpaper />
      <DesktopIcons />
      <Explorer />
      <Scanner />
      <svg className="absolute top-[461px] left-[1321px]" width="12" height="19">
        <path d="M.5.5V15L4 12 6.500 17.500 8.500 16.500 6.500 11.500H10.500Z" fill={W} stroke={K} strokeWidth=".9" />
      </svg>
      <Taskbar />
      <TopWatermark />
      <BottomWatermark />
    </div>
  );
}
